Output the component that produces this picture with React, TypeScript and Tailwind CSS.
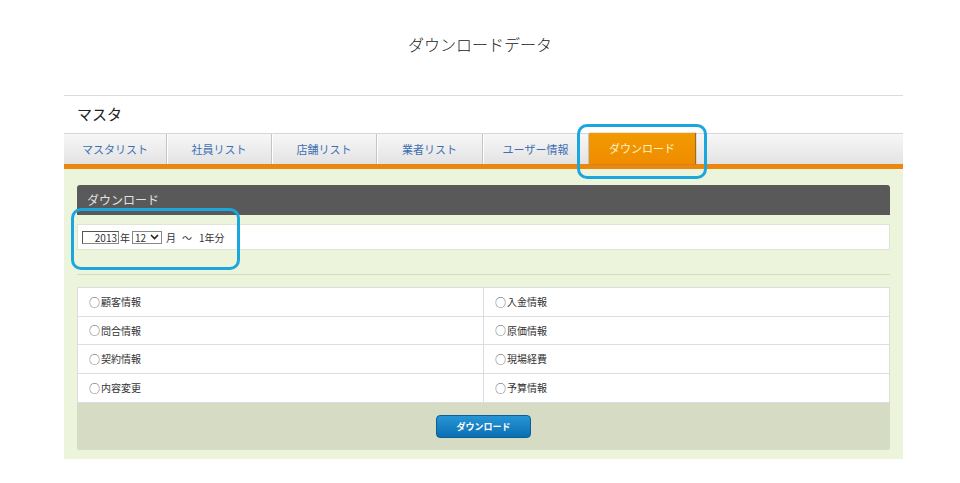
import React from "react"

const tabs = [
  { label: "マスタリスト", w: "w-[103px]" },
  { label: "社員リスト", w: "w-[105px]" },
  { label: "店舗リスト", w: "w-[105px]" },
  { label: "業者リスト", w: "w-[106px]" },
  { label: "ユーザー情報", w: "w-[106px]" },
]

const rows: [string, string][] = [
  ["顧客情報", "入金情報"],
  ["問合情報", "原価情報"],
  ["契約情報", "現場経費"],
  ["内容変更", "予算情報"],
]

function Cell({ label, last }: { label: string; last?: boolean }) {
  return (
    <div
      className={`flex items-center pl-[11px] text-[10px] text-[#333] ${last ? "" : "border-r border-[#dddddd]"}`}
    >
      <span className="mr-[1px] text-[11px] text-[#555]">○</span>
      {label}
    </div>
  )
}

export default function App() {
  return (
    <div
      className="relative w-[960px] h-[483px] bg-white overflow-hidden"
      style={{ fontFamily: '"Noto Sans CJK JP", "Noto Sans", sans-serif' }}
    >
      <h1 className="pt-[34px] text-center text-[16px] leading-[20px] font-light text-[#222]">
        ダウンロードデータ
      </h1>

      <div className="ml-[64px] w-[839px] mt-[41px]">
        <div className="h-px bg-[#dcdcdc]" />
        <div className="h-[37px] pl-[13px] flex items-center text-[15px] text-[#222]">マスタ</div>

        {/* tab bar */}
        <div className="flex h-[31px] bg-gradient-to-b from-[#f7f7f7] to-[#e3e3e3] border-t border-[#d6d6d6]">
          {tabs.map((t) => (
            <div
              key={t.label}
              className={`${t.w} flex items-center justify-center text-[11px] text-[#3d6fb3] border-r border-[#c4c4c4] shadow-[1px_0_0_#ffffff]`}
            >
              {t.label}
            </div>
          ))}
          <div className="w-[106px] -mt-px flex items-center justify-center text-[11px] text-[#fff2c8] bg-gradient-to-b from-[#f29a00] to-[#ef8c00] shadow-[1px_0_1px_#9a6a2a]">
            ダウンロード
          </div>
        </div>
        <div className="h-[5px] bg-[#e9870f]" />

        {/* panel */}
        <div className="bg-[#edf4dc] px-[13px] pt-[16px] pb-[9px]">
          <div className="h-[30px] rounded-t-[3px] bg-[#595959] flex items-center pl-[10px] text-[12px] text-[#e2e2e2]">
            ダウンロード
          </div>

          <div className="mt-[9px] h-[26px] bg-white border border-[#e0e4d4] flex items-center pl-[4px] text-[10px] text-[#333]">
            <div className="w-[37px] h-[13px] border border-[#888] border-t-[#555] border-l-[#555] text-right pr-[1px] text-[10px] leading-[11px]">
              2013
            </div>
            <span className="ml-[1px]">年</span>
            <div className="ml-[2px] w-[30px] h-[13px] border border-[#888] flex items-center pl-[2px] text-[10px] leading-[11px]">
              12
              <svg width="9" height="6" viewBox="0 0 9 6" className="ml-[4px]">
                <path d="M1 1 L4.5 4.5 L8 1" stroke="#222" strokeWidth="1.6" fill="none" />
              </svg>
            </div>
            <span className="ml-[4px]">月</span>
            <span className="ml-[6px]">～</span>
            <span className="ml-[7px]">1年分</span>
          </div>

          <div className="mt-[24px] h-px bg-[#d5d9c6]" />

          <div className="mt-[12px] bg-white border border-[#dddddd]">
            {rows.map(([a, b], i) => (
              <div
                key={a}
                className={`grid grid-cols-[406px_1fr] h-[28.5px] ${i < rows.length - 1 ? "border-b border-[#dddddd]" : ""}`}
              >
                <Cell label={a} />
                <Cell label={b} last />
              </div>
            ))}
          </div>

          <div className="h-[47px] bg-[#d6dbc4] rounded-b-[2px] flex items-center justify-center">
            <button className="w-[95px] h-[23px] rounded-[4px] bg-gradient-to-b from-[#2595d6] to-[#0a6fb2] border border-[#0b5f96] text-white text-[9px] font-bold">
              ダウンロード
            </button>
          </div>
        </div>
      </div>

      {/* annotation highlights */}
      <div className="absolute left-[577px] top-[124px] w-[130px] h-[55px] rounded-[10px] border-[3px] border-[#1ba6dd]" />
      <div className="absolute left-[71px] top-[208px] w-[169px] h-[62px] rounded-[10px] border-[3px] border-[#1ba6dd]" />
    </div>
  )
}
